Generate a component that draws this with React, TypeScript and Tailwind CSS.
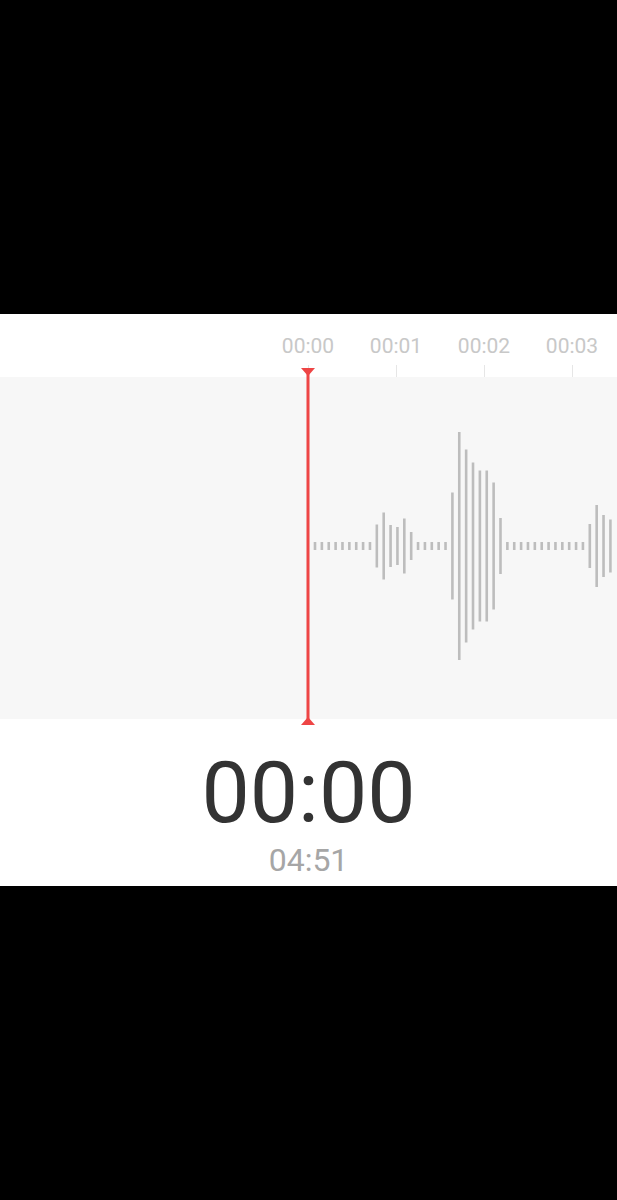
import React from 'react';

// bar index -> height in px (dots everywhere else)
const bars: Record<number, number> = {
  9: 43, 10: 67, 11: 42, 12: 38, 13: 55, 14: 28,
  20: 107, 21: 228, 22: 193, 23: 167, 24: 151, 25: 151, 26: 127, 27: 56,
  40: 44, 41: 82, 42: 62, 43: 53,
};

const labels = ['00:00', '00:01', '00:02', '00:03'];

function Waveform() {
  const center = 169;
  const items = [];
  for (let i = 0; i < 44; i++) {
    const x = 315 + i * 6.87 - 1.3;
    const h = bars[i] ?? 8;
    items.push(
      <rect key={i} x={x} y={center - h / 2} width={2.6} height={h} fill="#bdbdbd" />
    );
  }
  return (
    <svg width="617" height="342" viewBox="0 0 617 342" className="block">
      {items}
    </svg>
  );
}

function Playhead() {
  return (
    <div className="absolute left-[301px] top-[54px] w-[14px] h-[357px]">
      <svg width="14" height="357" viewBox="0 0 14 357" className="block">
        <rect x="5.5" y="0" width="3" height="357" fill="#ee4545" />
        <polygon points="0,0 14,0 7,8" fill="#ee4545" />
        <polygon points="0,357 14,357 7,349" fill="#ee4545" />
      </svg>
    </div>
  );
}

export default function App() {
  return (
    <div className="flex flex-col h-[1200px] w-[617px] bg-black" style={{ fontFamily: 'Roboto, "Liberation Sans", sans-serif' }}>
      <div className="h-[314px] bg-black" />
      <div className="relative h-[572px] bg-white overflow-hidden">
        <div className="h-[63px] flex pl-[264px] pt-[22px]">
          {labels.map((l) => (
            <div key={l} className="w-[88px] flex flex-col items-center">
              <span className="text-[21px] leading-[21px] text-[#c8c8c8]">{l}</span>
              <div className="mt-[8px] h-[12px] w-px bg-[#e6e6e6]" />
            </div>
          ))}
        </div>
        <div className="h-[342px] bg-[#f7f7f7]">
          <Waveform />
        </div>
        <div className="flex flex-col items-center pt-[31px]">
          <div className="text-[86px] leading-[86px] text-[#333333]">00:00</div>
          <div className="mt-[8px] text-[32px] leading-[32px] text-[#a6a6a6]">04:51</div>
        </div>
        <Playhead />
      </div>
      <div className="flex-1 bg-black" />
    </div>
  );
}
